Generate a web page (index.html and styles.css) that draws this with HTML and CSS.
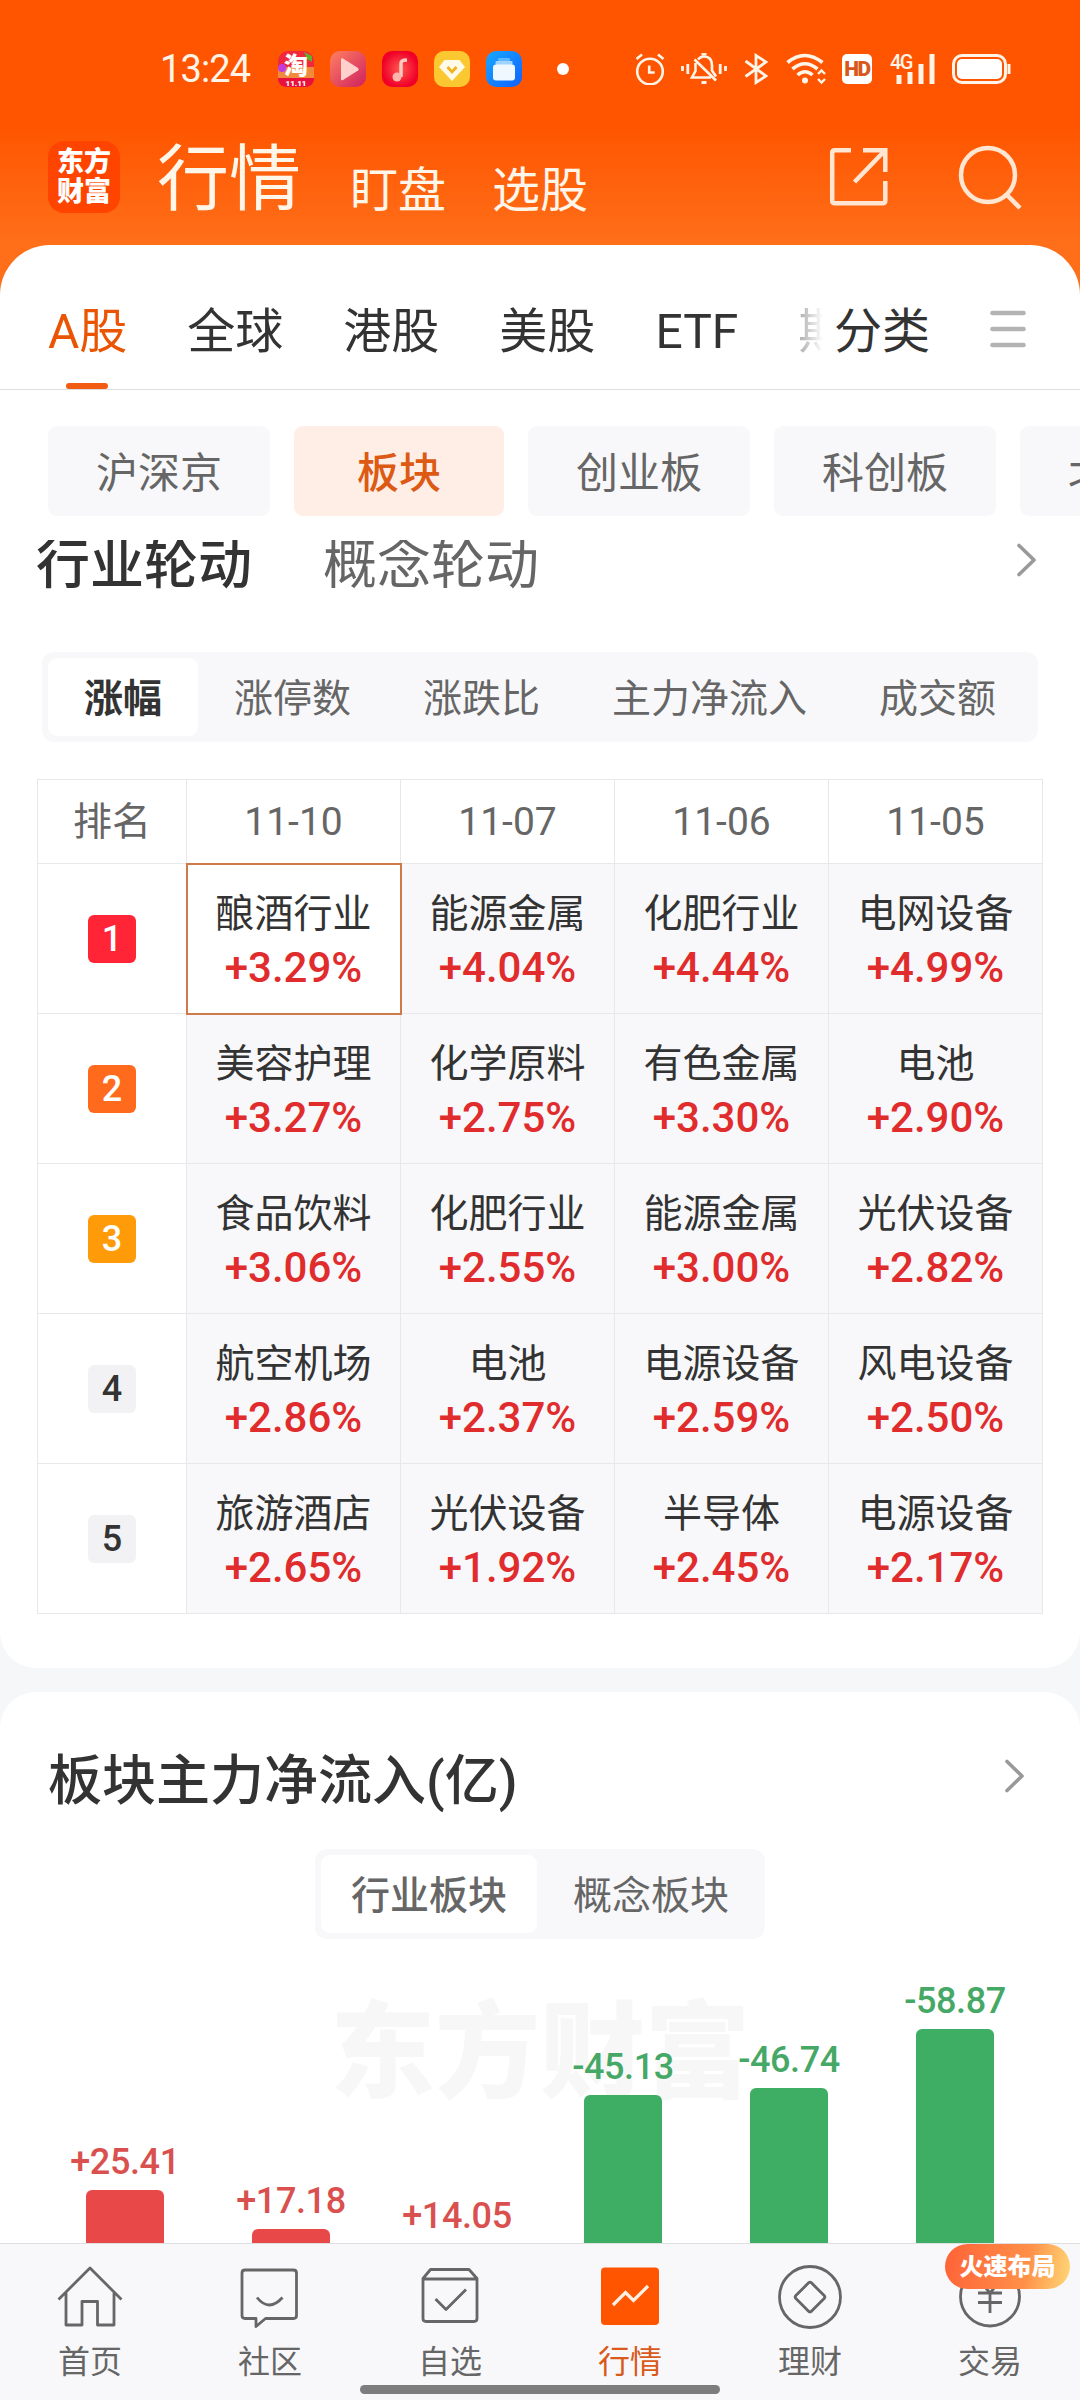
FILE: index.html
```html
<!DOCTYPE html>
<html lang="zh-CN">
<head>
  <meta charset="UTF-8" />
  <meta name="viewport" content="width=device-width, initial-scale=1" />
  <title>行情</title>
  <link rel="stylesheet" href="styles.css">
</head>
<body>
  <header class="hero">
    <div class="status">
      <span class="time">13:24</span>
      <div class="apps">
        <svg width="36" height="36" viewBox="0 0 36 36">
          <rect width="36" height="36" rx="10" fill="#f0283c"/>
          <path d="M0 16h36v11H0z" fill="#f08a3c"/>
          <circle cx="4" cy="17" r="4" fill="#c03ce0"/>
          <path d="M26 1l8 4v6l-5-3z" fill="#5fae2c"/>
          <path d="M0 27h36q0 9-10 9H10Q0 36 0 27z" fill="#e8103c"/>
          <text x="18" y="23" class="tao">淘</text>
          <text x="18" y="34.500" class="tao-day">11.11</text>
        </svg>
        <svg width="36" height="36" viewBox="0 0 36 36">
          <defs><linearGradient id="gv" x1="0" y1="0" x2="1" y2="1"><stop offset="0" stop-color="#ff8060"/><stop offset="1" stop-color="#cf2060"/></linearGradient></defs>
          <rect width="36" height="36" rx="10" fill="url(#gv)"/>
          <path d="M11 8.500q0-2 2-1l15 9.500q1.500 1 0 2.500L13 29q-2 1-2-1z" fill="#ffd0cc"/>
        </svg>
        <svg width="36" height="36" viewBox="0 0 36 36">
          <defs><radialGradient id="gm"><stop offset="0" stop-color="#ff5a50"/><stop offset="1" stop-color="#f00028"/></radialGradient></defs>
          <rect width="36" height="36" rx="10" fill="url(#gm)"/>
          <path d="M19 26V12q0-3 6-3" fill="none" stroke="#ffc8c0" stroke-width="3.500"/>
          <circle cx="15" cy="26" r="4.500" fill="#ffb4ac"/>
        </svg>
        <svg width="36" height="36" viewBox="0 0 36 36">
          <rect width="36" height="36" rx="10" fill="#fbc832"/>
          <path d="M10.500 9h15l5.500 7-13 14L5 16z" fill="#fffbe8"/>
          <path d="M13.500 16l4.500 5 4.500-5" fill="none" stroke="#f2b21e" stroke-width="2.800"/>
        </svg>
        <svg width="36" height="36" viewBox="0 0 36 36">
          <defs><linearGradient id="gf" x1="0" y1="0" x2="1" y2="1"><stop offset="0" stop-color="#18a8ff"/><stop offset="1" stop-color="#1060ff"/></linearGradient></defs>
          <rect width="36" height="36" rx="10" fill="url(#gf)"/>
          <rect x="12" y="7" width="12" height="3" rx="1" fill="#5ab8ff"/>
          <rect x="9.500" y="10" width="17" height="4" rx="1" fill="#9ed4ff"/>
          <rect x="7" y="13.500" width="22" height="16" rx="3" fill="#f0f8ff"/>
        </svg>
      </div>
      <i class="dot"></i>
      <div class="signals">
        <svg class="alarm" width="30" height="32" viewBox="0 0 30 32" fill="none" stroke="#fff4e8" stroke-width="2.600">
          <circle cx="15" cy="18.500" r="12.800"/>
          <path d="M14.200 12.500v7h5.500M1.500 6L7 1.500M28.500 6L23 1.500"/>
        </svg>
        <svg class="bell" width="46" height="32" viewBox="0 0 46 32" fill="none" stroke="#fff4e8" stroke-width="2.600">
          <path d="M17 6.500q2.500-3 6-3 8 0 8 9v5l4 6M14.500 10v8l-3.500 6.500h19M13.500 6.500L35 27.500"/>
          <path d="M20.500 1h5M20.500 29.500h5" stroke-width="3"/>
          <path d="M1.500 13v5M6.800 11v10M39.200 11v10M44.500 13v5" stroke-width="2.800"/>
        </svg>
        <svg class="bt" width="24" height="32" viewBox="0 0 24 32" fill="none" stroke="#fff4e8" stroke-width="2.800">
          <path d="M1.500 8L22 23 12 29.500v-27L22 9 1.500 23.500"/>
        </svg>
        <svg class="wifi" width="41" height="32" viewBox="0 0 41 32" fill="none" stroke="#fff4e8" stroke-width="3.600">
          <path d="M1.500 9.500q17-14 35 0M6.500 16q12.500-10.500 25 0M11.500 22q7.500-6.500 15 0"/>
          <circle cx="19" cy="27.500" r="3" fill="#fff4e8" stroke="none"/>
          <path d="M32 21l3.500-3.500L39 21M32 26l3.500 3.500L39 26" stroke-width="2.400"/>
        </svg>
        <span class="hd">HD</span>
        <svg class="cell" width="46" height="32" viewBox="0 0 46 32" fill="#fff4e8">
          <text x="0" y="15.500" class="net">4G</text>
          <rect x="6.500" y="22" width="5" height="9"/>
          <rect x="17.500" y="19" width="5" height="12"/>
          <rect x="28.500" y="11" width="5" height="20"/>
          <rect x="39.500" y="1" width="5" height="30"/>
        </svg>
        <svg width="59" height="32" viewBox="0 0 59 32">
          <rect x="1.500" y="2.500" width="52" height="27" rx="8.500" fill="none" stroke="#fff4e8" stroke-width="3"/>
          <rect x="5" y="6" width="45" height="20" rx="5" fill="#fff"/>
          <path d="M57 11v10" stroke="#fff4e8" stroke-width="3"/>
        </svg>
      </div>
    </div>

    <div class="topbar">
      <div class="logo">东方<br>财富</div>
      <h1>行情</h1>
      <span class="link">盯盘</span>
      <span class="link">选股</span>
      <svg class="share" width="60" height="60" viewBox="0 0 60 60" fill="none" stroke="#ffe6d2" stroke-width="4.500">
        <path d="M22 3.200H6q-2.800 0-2.800 2.800v47.500q0 2.800 2.800 2.800h47.500q2.800 0 2.800-2.800V34M34 3.200h22.300V25M56 3.500L25.500 35"/>
      </svg>
      <svg width="64" height="66" viewBox="0 0 64 66" fill="none" stroke="#ffe6d2" stroke-width="4.500">
        <circle cx="30" cy="31" r="27"/>
        <path d="M48.500 50.500L62 64"/>
      </svg>
    </div>
  </header>

  <main>
    <section class="card market">
      <nav class="tabs">
        <div class="tab-scroll">
          <span class="tab active">A股</span>
          <span class="tab">全球</span>
          <span class="tab">港股</span>
          <span class="tab">美股</span>
          <span class="tab">ETF</span>
          <span class="tab">期货</span>
        </div>
        <span class="tab">分类</span>
        <svg class="menu" width="36" height="38" viewBox="0 0 36 38" stroke="#b3b3b3" stroke-width="4.600" stroke-linecap="round">
          <path d="M2.500 3h31M2.500 19h31M2.500 35h31"/>
        </svg>
      </nav>

      <div class="chips">
        <span class="chip">沪深京</span>
        <span class="chip active">板块</span>
        <span class="chip">创业板</span>
        <span class="chip">科创板</span>
        <span class="chip last">北证</span>
      </div>

      <div class="rotation">
        <h2>行业轮动</h2>
        <span class="alt">概念轮动</span>
        <svg class="more" width="20" height="34" viewBox="0 0 20 34" fill="none" stroke="#999" stroke-width="3.600" stroke-linecap="round" stroke-linejoin="round">
          <path d="M2 2.500L17 17 2 31.500"/>
        </svg>
      </div>

      <div class="segment">
        <span class="active">涨幅</span>
        <span>涨停数</span>
        <span>涨跌比</span>
        <span>主力净流入</span>
        <span>成交额</span>
      </div>

      <table class="rank">
        <tr>
          <th class="no">排名</th>
          <th>11-10</th>
          <th>11-07</th>
          <th>11-06</th>
          <th>11-05</th>
        </tr>
        <tr>
          <td class="no"><b class="n1">1</b></td>
          <td class="picked">酿酒行业<em>+3.29%</em></td>
          <td>能源金属<em>+4.04%</em></td>
          <td>化肥行业<em>+4.44%</em></td>
          <td>电网设备<em>+4.99%</em></td>
        </tr>
        <tr>
          <td class="no"><b class="n2">2</b></td>
          <td>美容护理<em>+3.27%</em></td>
          <td>化学原料<em>+2.75%</em></td>
          <td>有色金属<em>+3.30%</em></td>
          <td>电池<em>+2.90%</em></td>
        </tr>
        <tr>
          <td class="no"><b class="n3">3</b></td>
          <td>食品饮料<em>+3.06%</em></td>
          <td>化肥行业<em>+2.55%</em></td>
          <td>能源金属<em>+3.00%</em></td>
          <td>光伏设备<em>+2.82%</em></td>
        </tr>
        <tr>
          <td class="no"><b>4</b></td>
          <td>航空机场<em>+2.86%</em></td>
          <td>电池<em>+2.37%</em></td>
          <td>电源设备<em>+2.59%</em></td>
          <td>风电设备<em>+2.50%</em></td>
        </tr>
        <tr>
          <td class="no"><b>5</b></td>
          <td>旅游酒店<em>+2.65%</em></td>
          <td>光伏设备<em>+1.92%</em></td>
          <td>半导体<em>+2.45%</em></td>
          <td>电源设备<em>+2.17%</em></td>
        </tr>
      </table>
    </section>

    <section class="card flow">
      <div class="flow-head">
        <h2>板块主力净流入(亿)</h2>
        <svg width="20" height="34" viewBox="0 0 20 34" fill="none" stroke="#999" stroke-width="3.600" stroke-linecap="round" stroke-linejoin="round">
          <path d="M2 2.500L17 17 2 31.500"/>
        </svg>
      </div>
      <div class="switch">
        <span class="active">行业板块</span>
        <span>概念板块</span>
      </div>
      <div class="chart">
        <div class="watermark">东方财富</div>
        <div class="bars">
          <div class="col up"><span>+25.41</span><i style="height:121px"></i></div>
          <div class="col up"><span>+17.18</span><i style="height:82px"></i></div>
          <div class="col up"><span>+14.05</span><i style="height:67px"></i></div>
          <div class="col down"><span>-45.13</span><i style="height:216px"></i></div>
          <div class="col down"><span>-46.74</span><i style="height:223px"></i></div>
          <div class="col down"><span>-58.87</span><i style="height:282px"></i></div>
        </div>
      </div>
    </section>
  </main>

  <footer class="nav">
    <div class="item">
      <svg width="66" height="66" viewBox="0 0 66 66" fill="none" stroke="#666" stroke-width="2.800" stroke-linejoin="round">
        <path d="M1.500 36.500L33 5l31.500 31.500M9 30v32h16V38.500h15.500V62H57V30"/>
      </svg>
      首页
    </div>
    <div class="item">
      <svg width="66" height="66" viewBox="0 0 66 66" fill="none" stroke="#666" stroke-width="2.800" stroke-linejoin="round">
        <path d="M8 7h48.500q3 0 3 3v42.500q0 3-3 3H28.500l-9.500 8v-8H8q-3 0-3-3V10q0-3 3-3z"/>
        <path d="M20 34.500q12 15 25.500 0"/>
      </svg>
      社区
    </div>
    <div class="item">
      <svg width="66" height="66" viewBox="0 0 66 66" fill="none" stroke="#666" stroke-width="2.800" stroke-linejoin="round">
        <path d="M13.500 6.500h38.500l8 9v40q0 3-3 3H9q-3 0-3-3v-40zM6 16h54M18.500 36L29 46.500 49 26.500"/>
      </svg>
      自选
    </div>
    <div class="item active">
      <svg width="66" height="66" viewBox="0 0 66 66" fill="none" stroke="#fff0e4" stroke-width="3.200">
        <rect x="4" y="4.500" width="58" height="57.500" rx="4" fill="#ff5500" stroke="none"/>
        <path d="M16 42l12.500-12.500 8 8L51 23"/>
      </svg>
      行情
    </div>
    <div class="item">
      <svg width="66" height="66" viewBox="0 0 66 66" fill="none" stroke="#666" stroke-width="2.800" stroke-linejoin="round">
        <circle cx="33" cy="34" r="30.500"/>
        <rect x="22" y="23" width="22" height="22" rx="2" transform="rotate(45 33 34)"/>
      </svg>
      理财
    </div>
    <div class="item">
      <svg width="66" height="66" viewBox="0 0 66 66" fill="none" stroke="#666" stroke-width="2.800">
        <circle cx="33" cy="33.500" r="29.500"/>
        <path d="M23 18l10 12 10-12M21 30h24M21 39.500h24M33 30v20"/>
      </svg>
      交易
      <span class="promo">火速布局</span>
    </div>
    <div class="home-bar"></div>
  </footer>
</body>
</html>
```
FILE: styles.css
```css
* {
  box-sizing: border-box;
}
body {
  margin: 0;
  width: 1080px;
  height: 2400px;
  display: flex;
  flex-direction: column;
  overflow: hidden;
  font-family: Roboto, "Noto Sans CJK SC", sans-serif;
  color: #333;
  background: #f6f7f9;
}
h1,
h2 {
  margin: 0;
  font-weight: 500;
}
svg {
  display: block;
  flex: none;
}

/* header */
.hero {
  flex: none;
  height: 295px;
  padding-top: 51px;
  background: linear-gradient(#ff5500 125px, #ff6f1a 245px);
}
.status {
  display: flex;
  align-items: center;
  height: 36px;
  padding-left: 160px;
}
.time {
  width: 118px;
  font-size: 38px;
  line-height: 36px;
  letter-spacing: -0.9px;
  color: #fff4e8;
}
.apps {
  display: flex;
  gap: 16px;
}
.tao {
  font-size: 24px;
  font-weight: 900;
  fill: #fff;
  text-anchor: middle;
}
.tao-day {
  font-size: 8px;
  font-weight: 900;
  fill: #fff;
  text-anchor: middle;
}
.dot {
  width: 12px;
  height: 12px;
  margin-left: 35px;
  border-radius: 50%;
  background: #fff;
}
.signals {
  display: flex;
  align-items: center;
  margin-left: 66px;
}
.bell {
  margin-left: 16px;
}
.bt {
  margin-left: 17px;
}
.wifi {
  margin-left: 18px;
}
.hd {
  width: 30px;
  height: 30px;
  margin-left: 15px;
  border-radius: 5px;
  background: #fff;
  color: #d8581c;
  font-size: 21px;
  font-weight: 900;
  line-height: 31px;
  letter-spacing: -1.5px;
  text-align: center;
}
.cell {
  margin-left: 18px;
  margin-right: 16px;
}
.net {
  font-size: 20px;
  font-weight: 500;
  letter-spacing: -1.5px;
}
.topbar {
  display: flex;
  align-items: center;
  height: 72px;
  margin-top: 54px;
  padding: 0 58px 0 48px;
  color: #fff6ea;
}
.logo {
  width: 72px;
  height: 72px;
  margin-right: 37px;
  padding-top: 6px;
  border-radius: 16px;
  background: #ff4400;
  color: #fff;
  font-size: 27px;
  font-weight: 900;
  line-height: 30px;
  text-align: center;
}
.topbar h1 {
  margin-right: 49px;
  padding-top: 5px;
  font-size: 72px;
  font-weight: 400;
  line-height: 80px;
}
.link {
  margin-right: 46px;
  padding-top: 28px;
  font-size: 48px;
  line-height: 56px;
}
.share {
  margin-left: auto;
  margin-right: 69px;
}

/* cards */
main {
  flex: 1;
  min-height: 0;
  margin-top: -50px;
  overflow: hidden;
}
.card {
  background: #fff;
}
.market {
  height: 1423px;
  border-radius: 50px 50px 36px 36px;
}
.tabs {
  display: flex;
  align-items: center;
  height: 145px;
  padding-left: 48px;
  border-bottom: 1px solid #dedede;
}
.tab-scroll {
  display: flex;
  gap: 60px;
  width: 775px;
  margin-right: 11px;
  overflow: hidden;
  white-space: nowrap;
  -webkit-mask-image: linear-gradient(90deg, #000 715px, transparent 775px);
  mask-image: linear-gradient(90deg, #000 715px, transparent 775px);
}
.tab {
  position: relative;
  height: 144px;
  font-size: 48px;
  line-height: 174px;
}
.tab.active {
  color: #ea5504;
}
.tab.active::after {
  content: "";
  position: absolute;
  left: 18px;
  bottom: 0;
  width: 42px;
  height: 6px;
  border-radius: 3px;
  background: #f25c12;
}
.menu {
  margin-left: 60px;
  margin-top: 24px;
}
.chips {
  display: flex;
  gap: 24px;
  padding: 36px 0 24px 48px;
  overflow: hidden;
}
.chip {
  flex: none;
  min-width: 210px;
  height: 90px;
  padding: 0 48px;
  border-radius: 9px;
  background: #f8f8fa;
  color: #666;
  font-size: 42px;
  line-height: 96px;
  text-align: center;
}
.chip.active {
  background: #ffeee5;
  color: #dc5a14;
  font-weight: 500;
}
.chip.last {
  text-align: left;
}
.rotation {
  display: flex;
  height: 112px;
  padding-left: 36px;
  overflow: hidden;
  font-size: 54px;
  line-height: 52px;
}
.rotation h2 {
  width: 287px;
  font-size: 54px;
}
.alt {
  color: #666;
}
.more {
  margin-left: auto;
  margin-right: 43px;
  margin-top: 3px;
}
.segment {
  display: flex;
  width: 996px;
  height: 90px;
  margin-left: 42px;
  padding: 6px;
  border-radius: 12px;
  background: #f8f8fa;
}
.segment span,
.switch span {
  height: 78px;
  padding: 0 36px;
  border-radius: 9px;
  color: #666;
  font-size: 39px;
  line-height: 83px;
  white-space: nowrap;
}
.segment .active {
  background: #fff;
  color: #333;
  font-weight: 700;
}

/* ranking table */
.rank {
  width: 1006px;
  margin: 37px 0 0 37px;
  border-collapse: collapse;
  table-layout: fixed;
  font-size: 39px;
  text-align: center;
}
.rank th,
.rank td {
  padding: 0;
  border: 1px solid #e8e8ea;
}
.rank th {
  height: 84px;
  color: #666;
  font-weight: 400;
  line-height: 46px;
}
.rank .no {
  width: 149px;
  padding-top: 0;
  background: #fff;
}
.rank td {
  height: 150px;
  padding-top: 5px;
  background: #f8f8fa;
  line-height: 54px;
}
.rank td.picked {
  background: #fff;
  outline: 2px solid #cf7a4a;
  outline-offset: -1px;
}
.rank em {
  display: block;
  color: #e02c2c;
  font-size: 42px;
  font-style: normal;
  font-weight: 500;
}
.rank b {
  display: block;
  width: 48px;
  height: 48px;
  margin: 0 auto;
  border-radius: 6px;
  background: #f2f2f4;
  font-size: 36px;
  font-weight: 500;
  line-height: 49px;
}
.rank .n1 {
  background: #ff2436;
  color: #fff;
}
.rank .n2 {
  background: #ff6a1c;
  color: #fff;
}
.rank .n3 {
  background: #ff9a08;
  color: #fff;
}

/* net inflow */
.flow {
  margin-top: 24px;
  border-radius: 36px 36px 0 0;
}
.flow-head {
  display: flex;
  justify-content: space-between;
  align-items: center;
  height: 157px;
  padding: 11px 55px 0 48px;
}
.flow-head h2 {
  font-size: 54px;
}
.switch {
  display: flex;
  gap: 6px;
  width: 450px;
  height: 90px;
  margin: 0 auto;
  padding: 6px;
  border-radius: 12px;
  background: #f8f8fa;
}
.switch span {
  width: 216px;
  padding: 0 30px;
}
.switch .active {
  background: #fff;
  font-weight: 500;
}
.chart {
  position: relative;
  height: 304px;
  overflow: hidden;
}
.watermark {
  position: absolute;
  top: 55px;
  left: 330px;
  color: #f7f7f7;
  font-size: 105px;
  font-weight: 900;
  line-height: 120px;
}
.bars {
  position: relative;
  display: flex;
  align-items: flex-end;
  height: 372px;
  padding: 0 42px;
}
.col {
  display: flex;
  flex: 1;
  flex-direction: column;
  align-items: center;
  font-size: 36px;
  font-weight: 500;
  line-height: 40px;
  letter-spacing: -0.4px;
}
.col i {
  width: 78px;
  margin-top: 8px;
  border-radius: 6px 6px 0 0;
}
.up {
  color: #d9504e;
}
.up i {
  background: #e84848;
}
.down {
  color: #46a866;
}
.down i {
  background: #3dae63;
}

/* bottom nav */
.nav {
  position: relative;
  display: flex;
  flex: none;
  height: 157px;
  border-top: 1px solid #dfdfe1;
  background: #f8f8fa;
}
.item {
  position: relative;
  display: flex;
  flex: 1;
  flex-direction: column;
  align-items: center;
  padding-top: 19px;
  color: #666;
  font-size: 32px;
  line-height: 66px;
}
.item.active {
  color: #d95a1a;
}
.promo {
  position: absolute;
  top: 0;
  right: 10px;
  width: 125px;
  height: 45px;
  border-radius: 23px;
  background: linear-gradient(100deg, #ff6238, #ff9048 65%, #ffd878);
  color: #fff;
  font-size: 24px;
  font-weight: 900;
  line-height: 47px;
  text-align: center;
}
.home-bar {
  position: absolute;
  left: 360px;
  bottom: 6px;
  width: 360px;
  height: 9px;
  border-radius: 5px;
  background: #7d7d7d;
}
```
